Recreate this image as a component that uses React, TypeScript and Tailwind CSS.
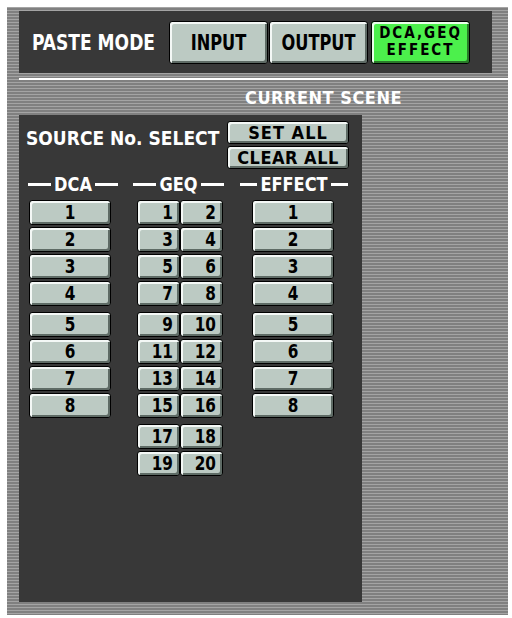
import React from "react";

/* ---------------- STYLES ---------------- */

const font = "font-['DejaVu_Sans_Condensed','DejaVu_Sans',sans-serif] font-bold";
const stripes =
  "bg-[repeating-linear-gradient(to_bottom,#a4a4a4_0px,#a4a4a4_1px,#808080_1px,#808080_3px)]";
const bevel =
  "border border-black rounded-[3px] bg-[#bccac3] shadow-[inset_2px_2px_0_#f4f8f6,inset_-2px_-2px_0_#5e6b65] text-black";

/* ---------------- COMPONENTS ---------------- */

function Key({
  label,
  className = "",
}: {
  label: string;
  className?: string;
}) {
  return (
    <div
      className={`${bevel} ${font} h-[25px] flex items-center justify-center text-[17px] leading-none ${className}`}
    >
      <span className="inline-block scale-y-110">{label}</span>
    </div>
  );
}

function Header({ label }: { label: string }) {
  return (
    <div className="flex items-center gap-[3px] h-[18px]">
      <div className="flex-1 h-[3px] bg-white" />
      <span className={`${font} text-white text-[18px] leading-none inline-block scale-y-110`}>
        {label}
      </span>
      <div className="flex-1 h-[3px] bg-white" />
    </div>
  );
}

function KeyColumn({ from }: { from: number }) {
  const group = (start: number) => (
    <div className="flex flex-col gap-[2px]">
      {[0, 1, 2, 3].map((i) => (
        <Key key={i} label={String(start + i)} className="w-[82px]" />
      ))}
    </div>
  );
  return (
    <div className="flex flex-col gap-[6px]">
      {group(from)}
      {group(from + 4)}
    </div>
  );
}

function GeqPair({ a }: { a: number }) {
  return (
    <div className="flex">
      <Key label={String(a)} className="w-[43px] !justify-end pr-[6px]" />
      <Key label={String(a + 1)} className="w-[43px] !justify-end pr-[6px]" />
    </div>
  );
}

function GeqGroup({ start }: { start: number }) {
  return (
    <div className="flex flex-col gap-[2px]">
      {[0, 2, 4, 6].slice(0, start === 17 ? 2 : 4).map((o) => (
        <GeqPair key={o} a={start + o} />
      ))}
    </div>
  );
}

/* ---------------- PAGE ---------------- */

export default function App() {
  return (
    <div className="w-[512px] h-[618px] bg-white pt-[7px] pl-[7px] pr-[4px] pb-[3px]">
      <div className={`${stripes} w-full h-full flex flex-col pt-[4px]`}>
        {/* PASTE MODE */}
        <div className="ml-[12px] w-[473px] h-[62px] bg-[#383838] flex items-center pl-[13px]">
          <span className={`${font} text-white text-[19px] leading-none w-[137px] inline-block scale-y-115 origin-left`}>
            PASTE MODE
          </span>
          <div className="flex gap-[1px]">
            <div className={`${bevel} ${font} w-[99px] h-[43px] flex items-center justify-center text-[18px]`}>
              <span className="inline-block scale-y-115">INPUT</span>
            </div>
            <div className={`${bevel} ${font} w-[99px] h-[43px] flex items-center justify-center text-[18px]`}>
              <span className="inline-block scale-y-115">OUTPUT</span>
            </div>
            <div className="ml-[2px] w-[99px] h-[43px] border border-black rounded-[3px] bg-[#4cf04c] shadow-[inset_2px_2px_0_#eaffea,inset_-2px_-2px_0_#2a7a2a] flex items-center justify-center text-black">
              <span className={`${font} text-[15px] leading-[17px] tracking-[2px] text-center`}>
                DCA,GEQ
                <br />
                EFFECT
              </span>
            </div>
          </div>
        </div>

        <div className="ml-[12px] mt-[5px] h-[2px] bg-white" />

        {/* CURRENT SCENE */}
        <div className="h-[35px] flex items-center pl-[238px]">
          <span className={`${font} text-white text-[18px] leading-none tracking-[0.5px]`}>
            CURRENT SCENE
          </span>
        </div>

        {/* MAIN PANEL */}
        <div className="ml-[12px] w-[343px] h-[487px] bg-[#383838] pt-[6px]">
          <div className="flex items-start">
            <span className={`${font} text-white text-[19px] leading-none pl-[7px] mt-[8px] w-[208px] inline-block scale-y-105 origin-left`}>
              SOURCE No. SELECT
            </span>
            <div className="flex flex-col gap-[2px]">
              <div className={`${bevel} ${font} w-[122px] h-[23px] flex items-center justify-center text-[18px] leading-none tracking-[1px]`}>
                SET ALL
              </div>
              <div className={`${bevel} ${font} w-[122px] h-[23px] flex items-center justify-center text-[18px] leading-none tracking-[0.5px]`}>
                CLEAR ALL
              </div>
            </div>
          </div>

          <div className="flex pl-[9px] mt-[6px]">
            <div className="w-[90px] flex flex-col">
              <Header label="DCA" />
              <div className="mt-[7px] ml-[1px]">
                <KeyColumn from={1} />
              </div>
            </div>
            <div className="ml-[15px] w-[91px] flex flex-col">
              <Header label="GEQ" />
              <div className="mt-[7px] ml-[4px] flex flex-col gap-[6px]">
                <GeqGroup start={1} />
                <GeqGroup start={9} />
                <GeqGroup start={17} />
              </div>
            </div>
            <div className="ml-[16px] w-[108px] flex flex-col">
              <Header label="EFFECT" />
              <div className="mt-[7px] ml-[12px]">
                <KeyColumn from={1} />
              </div>
            </div>
          </div>
        </div>
      </div>
    </div>
  );
}
